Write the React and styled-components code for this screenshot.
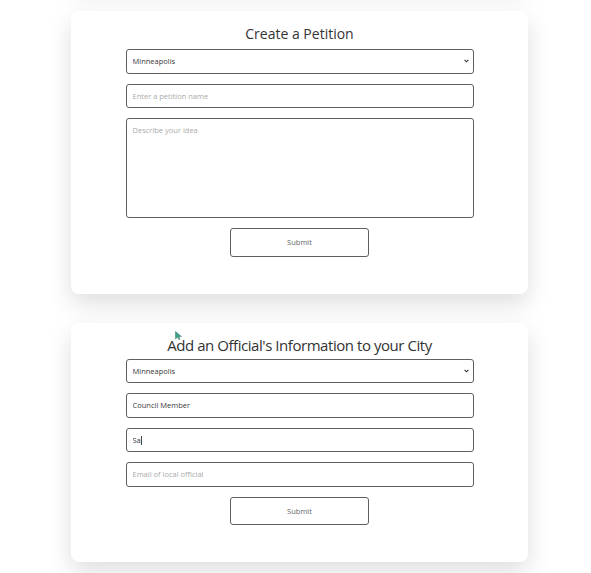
import React from "react";
import styled, { createGlobalStyle } from "styled-components";

const Global = createGlobalStyle`
  html, body { margin: 0; padding: 0; background: #ffffff; overflow: hidden; }
  body { font-family: "Open Sans", "Noto Sans", sans-serif; }
`;

const Page = styled.div`
  display: flex;
  flex-direction: column;
  align-items: center;
  gap: 29px;
  width: 599px;
  height: 573px;
  overflow: hidden;
`;

const Card = styled.section`
  position: relative;
  box-sizing: border-box;
  width: 457px;
  background: #fff;
  border-radius: 8px;
  box-shadow: 0 10px 24px rgba(0, 0, 0, 0.13);
  display: flex;
  flex-direction: column;
  align-items: center;
  padding: ${(p) => p.$pt}px 0 37px;
  flex-shrink: 0;
`;

const StubCard = styled(Card)`
  height: 40px;
  margin-top: -58px;
  padding: 0;
`;

const Title = styled.h2`
  margin: 0;
  font-weight: 400;
  color: #333;
  font-size: ${(p) => p.$size}px;
  line-height: ${(p) => p.$lh}px;
  letter-spacing: ${(p) => p.$ls || 0}px;
  white-space: nowrap;
`;

const Form = styled.form`
  width: 348px;
  display: flex;
  flex-direction: column;
  align-items: center;
  gap: 10px;
`;

const fieldBase = `
  display: block;
  box-sizing: border-box;
  width: 100%;
  border: 1.5px solid #5f5f5f;
  border-radius: 3px;
  background: #fff;
  font-family: "Open Sans", "Noto Sans", sans-serif;
  font-size: 7.5px;
  color: #3a3a3a;
  outline: none;
  margin: 0;
  &::placeholder { color: #aaa; }
`;

const FieldWrap = styled.div`
  position: relative;
  width: 100%;
  height: 24.5px;
`;

const Select = styled.select`
  ${fieldBase}
  height: 24.5px;
  padding: 0 14px 0 6px;
  appearance: none;
  -webkit-appearance: none;
`;

const Chevron = styled.svg`
  position: absolute;
  right: 5px;
  top: 10px;
  width: 5px;
  height: 4px;
  pointer-events: none;
`;

const Input = styled.input`
  ${fieldBase}
  height: 24.5px;
  padding: 0 6px;
`;

const Caret = styled.span`
  position: absolute;
  left: ${(p) => p.$left}px;
  top: 8px;
  width: 1px;
  height: 9px;
  background: #444;
  pointer-events: none;
`;

const TextArea = styled.textarea`
  ${fieldBase}
  height: 100px;
  padding: 6px 6px;
  resize: none;
`;

const Button = styled.button`
  box-sizing: border-box;
  width: 139px;
  height: 28.5px;
  border: 1.5px solid #5f5f5f;
  border-radius: 3px;
  background: #fff;
  color: #666;
  font-family: "Open Sans", "Noto Sans", sans-serif;
  font-size: 7.5px;
  cursor: pointer;
`;

const Cursor = styled.svg`
  position: absolute;
  left: 104px;
  top: 8px;
  width: 7px;
  height: 9px;
`;

function CitySelect() {
  return (
    <FieldWrap>
      <Select defaultValue="Minneapolis">
        <option>Minneapolis</option>
        <option>St. Paul</option>
      </Select>
      <Chevron viewBox="0 0 5 4">
        <path d="M0.6 0.8 L2.5 2.8 L4.4 0.8" fill="none" stroke="#333" strokeWidth="1.1" />
      </Chevron>
    </FieldWrap>
  );
}

export default function App() {
  return (
    <>
      <Global />
      <Page>
        <StubCard />
        <Card $pt={8}>
          <Title $size={14} $lh={30}>Create a Petition</Title>
          <Form onSubmit={(e) => e.preventDefault()}>
            <CitySelect />
            <Input placeholder="Enter a petition name" />
            <TextArea placeholder="Describe your idea" />
            <Button type="submit">Submit</Button>
          </Form>
        </Card>
        <Card $pt={8}>
          <Cursor viewBox="0 0 7 9">
            <path d="M0.5 0.5 L0.5 8 L2.6 6.1 L4 8.6 L5 8.1 L3.7 5.6 L6.5 5.5 Z" fill="#3fa38a" stroke="#2b7a66" strokeWidth="0.5" />
          </Cursor>
          <Title $size={15} $lh={28} $ls={-0.45}>Add an Official's Information to your City</Title>
          <Form onSubmit={(e) => e.preventDefault()}>
            <CitySelect />
            <Input placeholder="Role of local official" defaultValue="Council Member" />
            <FieldWrap>
              <Input placeholder="Name of local official" defaultValue="Sa" />
              <Caret $left={15} />
            </FieldWrap>
            <Input placeholder="Email of local official" />
            <Button type="submit">Submit</Button>
          </Form>
        </Card>
      </Page>
    </>
  );
}
